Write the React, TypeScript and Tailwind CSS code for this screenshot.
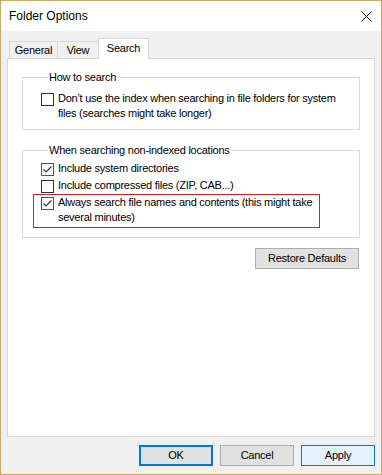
import React from "react";

function Check({ checked }: { checked: boolean }) {
  return (
    <div
      className={
        "w-[13px] h-[13px] shrink-0 bg-white border mt-[2px] " +
        (checked ? "border-[#555555]" : "border-[#333333]")
      }
    >
      {checked && (
        <svg width="11" height="11" viewBox="0 0 11 11" className="block">
          <path d="M1.5 5.5 L4 8 L9.5 2.5" fill="none" stroke="#333" strokeWidth="1.1" />
        </svg>
      )}
    </div>
  );
}

function Row({ checked, children }: { checked: boolean; children: React.ReactNode }) {
  return (
    <div className="flex items-start gap-[4px]">
      <Check checked={checked} />
      <div className="leading-[15px]">{children}</div>
    </div>
  );
}

export default function App() {
  return (
    <div className="w-[382px] h-[475px] border border-[#caa95c] flex flex-col text-black font-['Liberation_Sans',Arial,sans-serif] text-[11px] tracking-[-0.25px]">
      <div className="h-[30px] bg-white flex items-center justify-between pl-[8px] pr-[9px] text-[12px] tracking-normal">
        <span>Folder Options</span>
        <svg width="11" height="11" viewBox="0 0 11 11">
          <path d="M0.5 0.5 L10.5 10.5 M10.5 0.5 L0.5 10.5" stroke="#000" strokeWidth="1" />
        </svg>
      </div>
      <div className="flex-1 bg-[#f0f0f0] px-[6px] pt-[7px] flex flex-col">
        <div className="flex items-end h-[20px] pl-[2px]">
          <div className="h-[17px] w-[49px] border border-b-0 border-[#d9d9d9] flex items-center justify-center">
            General
          </div>
          <div className="h-[17px] w-[41px] border border-l-0 border-b-0 border-[#d9d9d9] flex items-center justify-center">
            View
          </div>
          <div className="relative z-10 -ml-[1px] -mb-[1px] h-[21px] w-[51px] bg-white border border-b-0 border-[#d9d9d9] flex items-center justify-center pb-[1px]">
            Search
          </div>
        </div>
        <div className="h-[379px] border border-[#d9d9d9] bg-white px-[14px] flex flex-col">
          <fieldset className="mt-[11px] border border-[#dcdcdc] pl-[18px] pr-[4px] pt-[7px] pb-[8px]">
            <legend className="ml-[7px] px-[1px] leading-[14px]">How to search</legend>
            <Row checked={false}>
              Don’t use the index when searching in file folders for system
              <br />
              files (searches might take longer)
            </Row>
          </fieldset>
          <fieldset className="mt-[13px] border border-[#dcdcdc] pl-[18px] pr-[4px] pt-[4px] pb-[12px]">
            <legend className="ml-[7px] px-[1px] leading-[14px]">When searching non-indexed locations</legend>
            <Row checked={true}>Include system directories</Row>
            <div className="mt-[2px]">
              <Row checked={false}>Include compressed files (ZIP, CAB...)</Row>
            </div>
            <div className="mt-[2px] relative">
              <Row checked={true}>
                Always search file names and contents (this might take
                <br />
                several minutes)
              </Row>
              <div className="absolute top-[-1px] left-[-8px] w-[287px] h-[34px] border border-[#e51b24]" />
            </div>
          </fieldset>
          <div className="mt-[10px] flex justify-end pr-[1px]">
            <button className="w-[104px] h-[21px] bg-[#e1e1e1] border border-[#adadad] flex items-center justify-center">
              Restore Defaults
            </button>
          </div>
        </div>
        <div className="mt-[8px] flex justify-end gap-[7px]">
          <button className="w-[74px] h-[21px] bg-[#e1e1e1] border-2 border-[#0078d7] flex items-center justify-center">
            OK
          </button>
          <button className="w-[74px] h-[21px] bg-[#e1e1e1] border border-[#adadad] flex items-center justify-center">
            Cancel
          </button>
          <button className="w-[74px] h-[21px] bg-[#e5f1fb] border border-[#0078d7] flex items-center justify-center">
            Apply
          </button>
        </div>
      </div>
    </div>
  );
}
